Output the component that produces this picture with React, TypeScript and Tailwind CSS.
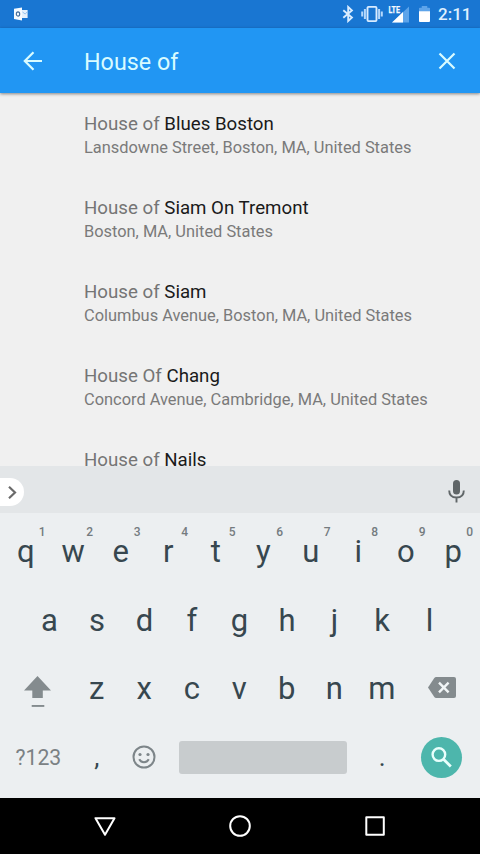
import React from "react";

type Place = { prefix: string; rest: string; address?: string };

const places: Place[] = [
  { prefix: "House of", rest: "Blues Boston", address: "Lansdowne Street, Boston, MA, United States" },
  { prefix: "House of", rest: "Siam On Tremont", address: "Boston, MA, United States" },
  { prefix: "House of", rest: "Siam", address: "Columbus Avenue, Boston, MA, United States" },
  { prefix: "House Of", rest: "Chang", address: "Concord Avenue, Cambridge, MA, United States" },
  { prefix: "House of", rest: "Nails" },
];

function StatusBar() {
  return (
    <div className="flex h-7 shrink-0 items-center bg-[#1976d2] pl-[14px] pr-[10px] text-white">
      <svg className="h-[14px] w-[15px]" viewBox="0 0 15 14">
        <path d="M7 3h6.600v8H7z" fill="#e3f0fc" />
        <path d="M8.500 5l2.600 2L13.600 4.600" stroke="#8bbcec" strokeWidth="0.9" fill="none" />
        <path d="M0 1.800L8 .4v13L0 12z" fill="#f4faff" />
        <ellipse cx="4" cy="7" rx="1.700" ry="2.100" stroke="#426b99" strokeWidth="1.100" fill="none" />
      </svg>
      <div className="flex-1" />
      <svg className="h-[18px] w-3" viewBox="0 0 12 18">
        <path d="M1.300 5.200l8.600 7.400L6.200 16V2l3.700 3.400-8.600 7.400" stroke="#d9ecff" strokeWidth="1.900" fill="none" />
      </svg>
      <svg className="ml-[7px] h-[18px] w-[22px]" viewBox="0 0 22 18">
        <rect x="6.500" y="1.900" width="9" height="14.200" rx="1" stroke="#d9ecff" strokeWidth="1.900" fill="none" />
        <path d="M3.900 4v10M1.200 6.500v5M18.100 4v10M20.800 6.500v5" stroke="#b5d8fb" strokeWidth="2" />
      </svg>
      <svg className="ml-[5px] h-[19px] w-[22px]" viewBox="0 0 22 19">
        <path d="M21 1.500v16H4z" fill="#5da4ea" />
        <path d="M15 7.100v10.400H4z" fill="#fff" />
        <text x="0.500" y="8" fontFamily="Roboto, sans-serif" fontSize="9.500" fontWeight="700" fill="#f2f9ff" stroke="#f2f9ff" strokeWidth="0.25" textLength="11.500" lengthAdjust="spacingAndGlyphs">LTE</text>
      </svg>
      <svg className="ml-[9px] h-4 w-[11px]" viewBox="0 0 12 17" preserveAspectRatio="none">
        <path d="M0 6V2.500Q0 1.800 1 1.800H3V0h6v1.800h2q1 0 1 .7V6z" fill="#5da4ea" />
        <path d="M0 5.500h12V16q0 1-1 1H1q-1 0-1-1z" fill="#fff" />
      </svg>
      <span className="ml-[8px] mt-px w-8 whitespace-nowrap text-[17px] font-medium leading-none text-[#dff0ff]">2:11</span>
    </div>
  );
}

function SearchBar() {
  return (
    <header className="z-10 flex h-[65px] shrink-0 items-center bg-[#2196f3] pl-[23px] pr-[24px] text-[#d8fbff] shadow-[0_1px_3px_rgba(0,0,0,0.45)]">
      <svg className="h-5 w-5" viewBox="0 0 20 20" fill="none" stroke="currentColor" strokeWidth="2.200">
        <path d="M19 10H2M10.500 1.300L1.800 10l8.700 8.700" />
      </svg>
      <span className="ml-[41px] mt-[3px] flex-1 text-[23.300px] leading-7">House of</span>
      <svg className="h-[18px] w-[18px]" viewBox="0 0 18 18" stroke="currentColor" strokeWidth="2.200">
        <path d="M1.500 1.500l15 15M16.500 1.500l-15 15" />
      </svg>
    </header>
  );
}

function Key({ label, hint }: { label: string; hint?: string }) {
  return (
    <div className="relative flex h-full w-[47.5px] items-center justify-center text-[31px] leading-none text-[#37474f]">
      {label}
      {hint && <span className="absolute right-[4px] top-[8.500px] text-[12px] font-medium leading-none text-[#747b7f]">{hint}</span>}
    </div>
  );
}

function PunctuationKey({ label }: { label: string }) {
  return (
    <div className="flex h-full w-[47.5px] items-center justify-center text-[26px] leading-none text-[#37474f]">{label}</div>
  );
}

function Keyboard() {
  return (
    <section className="h-[285px] shrink-0 bg-[#eceff1] pt-1">
      <div className="flex h-[68.5px] pl-[2px]">
        {"qwertyuiop".split("").map((c, i) => (
          <Key key={c} label={c} hint={String((i + 1) % 10)} />
        ))}
      </div>
      <div className="mt-[0.5px] flex h-[68.5px] justify-center pr-px">
        {"asdfghjkl".split("").map((c) => (
          <Key key={c} label={c} />
        ))}
      </div>
      <div className="flex h-[68.5px] items-center">
        <div className="flex w-[73px] pl-6">
          <svg className="mt-[7px] h-8 w-7" viewBox="0 0 28 32" fill="#848b8e">
            <path d="M13.500 0L27 14.500h-8.200V22H8.300v-7.500H0z" />
            <path d="M7.700 29h12.600v1.900H7.700z" />
          </svg>
        </div>
        {"zxcvbnm".split("").map((c) => (
          <Key key={c} label={c} />
        ))}
        <svg className="mb-[3px] ml-[22px] h-[21px] w-7" viewBox="0 0 28 21">
          <path d="M0 10.500L6.300 1Q7 0 8.200 0H26q2 0 2 2v17q0 2-2 2H8.200Q7 21 6.300 20z" fill="#848b8e" />
          <path d="M11 5.700l9.600 9.600M20.600 5.700L11 15.300" stroke="#f1f5f6" strokeWidth="2.400" />
        </svg>
      </div>
      <div className="flex h-[68.5px] items-center">
        <span className="w-[73px] pl-[15.500px] text-[21.200px] leading-none text-[#7b8184]">?123</span>
        <PunctuationKey label="," />
        <svg className="mb-px ml-[11.500px] h-6 w-6" viewBox="0 0 24 24" fill="none" stroke="#7d8589" strokeWidth="2">
          <circle cx="12" cy="12" r="10.500" />
          <circle cx="8" cy="9.500" r="1.600" fill="#7d8589" stroke="none" />
          <circle cx="16" cy="9.500" r="1.600" fill="#7d8589" stroke="none" />
          <path d="M7.200 14.200q1.700 3 4.800 3t4.800-3" />
        </svg>
        <div className="ml-[23px] mt-px h-[33px] w-[168px] rounded-[3px] bg-[#c8ccce]" />
        <div className="ml-[11.500px]">
          <PunctuationKey label="." />
        </div>
        <div className="ml-[15px] mt-px flex h-[41px] w-[41px] items-center justify-center rounded-full bg-[#4db6ac]">
          <svg className="h-[21px] w-[21px]" viewBox="0 0 21 21" fill="none" stroke="#e9fffc" strokeWidth="2.400">
            <circle cx="7.900" cy="7.600" r="6.300" />
            <path d="M12.500 12.200l7.300 7.300" strokeWidth="2.800" />
          </svg>
        </div>
      </div>
    </section>
  );
}

export default function App() {
  return (
    <main className="flex h-[854px] w-[480px] flex-col overflow-hidden bg-[#f0f0f0] font-['Roboto',sans-serif]">
      <StatusBar />
      <SearchBar />
      <ul className="h-[373px] shrink-0 pl-[84px] pt-[19px]">
        {places.map((p) => (
          <li key={p.rest} className="h-[84px] whitespace-nowrap last:h-6">
            <p className="text-[18.700px] leading-6 text-[#757575]">
              {p.prefix} <span className="text-[#1a1a1a]">{p.rest}</span>
            </p>
            {p.address && <p className="text-[16.400px] leading-6 text-[#7a7a7a]">{p.address}</p>}
          </li>
        ))}
      </ul>
      <div className="flex h-[47px] shrink-0 items-center justify-between bg-[#e3e6e8] pr-[15px]">
        <div className="mt-[5px] flex h-7 w-[23.500px] items-center rounded-r-full bg-white pl-2">
          <svg className="h-[13px] w-[9px]" viewBox="0 0 9 13" fill="none" stroke="#6a6a6a" strokeWidth="2.200">
            <path d="M1 .8l6 5.700-6 5.700" />
          </svg>
        </div>
        <svg className="mt-[4px] h-[23px] w-[17px]" viewBox="0 0 17 23" fill="none" stroke="#606668" strokeWidth="1.900">
          <rect x="5" y="0" width="7" height="14.500" rx="3.500" fill="#606668" stroke="none" />
          <path d="M1.200 10.500q0 7 7.300 7t7.300-7M8.500 17.500V22.500" />
        </svg>
      </div>
      <Keyboard />
      <nav className="flex h-14 shrink-0 items-center justify-between bg-black pl-[94px] pr-[94px]">
        <svg className="h-[19px] w-[22px]" viewBox="0 0 22 19" fill="none" stroke="#fff" strokeWidth="2" strokeLinejoin="round">
          <path d="M1.500 1.200h19L11 17.800z" />
        </svg>
        <svg className="h-[22px] w-[22px]" viewBox="0 0 22 22" fill="none" stroke="#fff" strokeWidth="2">
          <circle cx="11" cy="11" r="9.800" />
        </svg>
        <svg className="h-[22px] w-[22px]" viewBox="0 0 22 22" fill="none" stroke="#fff" strokeWidth="2" strokeLinejoin="round">
          <rect x="2.300" y="2.300" width="17.500" height="17.500" />
        </svg>
      </nav>
    </main>
  );
}
